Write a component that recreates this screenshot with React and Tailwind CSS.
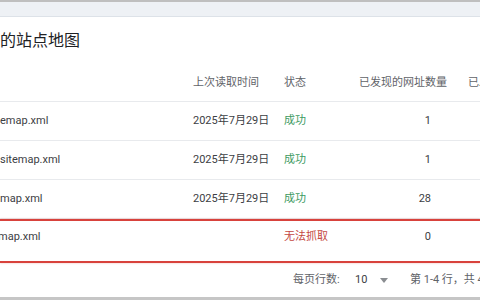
const rows = [
  { name: 'emap.xml', date: '2025年7月29日', ok: true, count: '1' },
  { name: 'sitemap.xml', date: '2025年7月29日', ok: true, count: '1' },
  { name: 'map.xml', date: '2025年7月29日', ok: true, count: '28' },
];

const font = { fontFamily: 'Roboto, "Noto Sans CJK SC", sans-serif' };

const Cells = ({ row }) => (
  <>
    <div className="w-[193px] shrink-0 text-[#3c4043]">{row.name}</div>
    <div className="w-[91px] shrink-0 text-[#3c4043]">{row.date}</div>
    <div className={`w-[75px] shrink-0 ${row.ok ? 'text-[#3d9a62]' : 'text-[#c4473f]'}`}>
      {row.ok ? '成功' : '无法抓取'}
    </div>
    <div className="w-[72px] shrink-0 text-right text-[#3c4043]">{row.count}</div>
  </>
);

const App = () => {
  return (
    <div
      className="w-[480px] h-[300px] overflow-hidden bg-white flex flex-col text-[11px] leading-4"
      style={font}
    >
      {/* browser-ish top strip */}
      <div className="h-[2px] bg-[#bfbfbf] shrink-0" />
      <div className="h-[15px] bg-[#eef1f5] border-b border-[#dde2e8] shrink-0" />

      <div className="h-[44px] shrink-0 flex items-center text-[16px] text-[#202124] pt-[3px]">
        的站点地图
      </div>

      {/* table header */}
      <div className="h-[41px] shrink-0 flex items-center pt-[3px] border-b border-[#e8eaed] text-[#5f6368] whitespace-nowrap">
        <div className="w-[193px] shrink-0" />
        <div className="w-[91px] shrink-0">上次读取时间</div>
        <div className="w-[75px] shrink-0">状态</div>
        <div className="w-[72px] shrink-0 text-right">已发现的网址数量</div>
        <div className="pl-[37px]">已发现的视频数量</div>
      </div>

      {rows.map((row, i) => (
        <div
          key={i}
          className="h-[39px] shrink-0 flex items-center border-b border-[#e8eaed] whitespace-nowrap"
        >
          <Cells row={row} />
        </div>
      ))}

      {/* highlighted failing row */}
      <div className="h-[44px] shrink-0 flex items-start pt-[8px] border-y-2 border-[#d8423c] shadow-[0_0_2px_rgba(216,66,60,0.35)] whitespace-nowrap">
        <div className="w-[193px] shrink-0 text-[#3c4043] -ml-[2px]">map.xml</div>
        <div className="w-[93px] shrink-0" />
        <div className="w-[75px] shrink-0 text-[#c4473f]">无法抓取</div>
        <div className="w-[72px] shrink-0 text-right text-[#3c4043]">0</div>
      </div>

      {/* pagination */}
      <div className="flex-1 flex items-center text-[#5f6368] whitespace-nowrap">
        <div className="w-[293px] shrink-0" />
        <div className="w-[62px] shrink-0">每页行数:</div>
        <div className="w-[22px] shrink-0 text-[#3c4043]">10</div>
        <svg width="8" height="5" viewBox="0 0 8 5" className="shrink-0 ml-[3px]">
          <path d="M0 0h8L4 5z" fill="#8a8d91" />
        </svg>
        <div className="pl-[22px]">第 1-4 行，共 4 行</div>
      </div>
      <div className="h-[3px] bg-[#c6c6c6] shrink-0" />
    </div>
  );
};

export default App;
